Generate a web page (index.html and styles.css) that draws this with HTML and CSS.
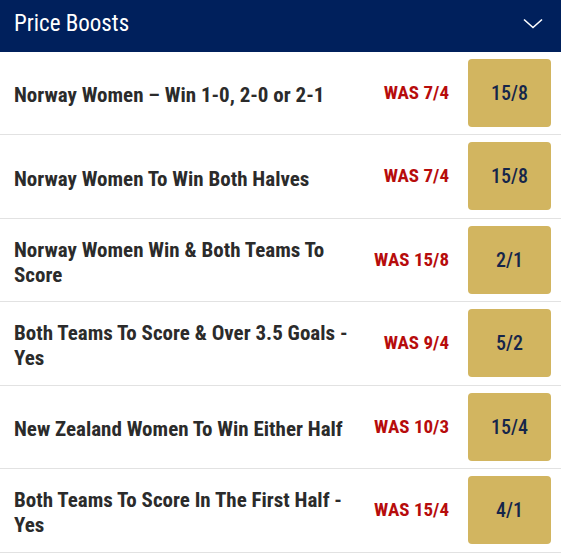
FILE: index.html
```html
<!DOCTYPE html>
<html>
<head>
<meta charset="utf-8">
<link rel="stylesheet" href="styles.css">
</head>
<body>
<div class="panel">
  <div class="header">
    <span class="title">Price Boosts</span>
    <svg class="chevron" width="20" height="12" viewBox="0 0 20 12"><path d="M1 1.5 L10 9.5 L19 1.5" fill="none" stroke="#fff" stroke-width="1.6"/></svg>
  </div>
  <div class="row">
    <div class="name">Norway Women – Win 1-0, 2-0 or 2-1</div>
    <div class="was">WAS 7/4</div>
    <div class="odds">15/8</div>
  </div>
  <div class="row">
    <div class="name">Norway Women To Win Both Halves</div>
    <div class="was">WAS 7/4</div>
    <div class="odds">15/8</div>
  </div>
  <div class="row">
    <div class="name">Norway Women Win &amp; Both Teams To Score</div>
    <div class="was">WAS 15/8</div>
    <div class="odds">2/1</div>
  </div>
  <div class="row">
    <div class="name">Both Teams To Score &amp; Over 3.5 Goals - Yes</div>
    <div class="was">WAS 9/4</div>
    <div class="odds">5/2</div>
  </div>
  <div class="row">
    <div class="name">New Zealand Women To Win Either Half</div>
    <div class="was">WAS 10/3</div>
    <div class="odds">15/4</div>
  </div>
  <div class="row">
    <div class="name">Both Teams To Score In The First Half - Yes</div>
    <div class="was">WAS 15/4</div>
    <div class="odds">4/1</div>
  </div>
</div>
</body>
</html>
```
FILE: styles.css
```css
html, body {
  margin: 0;
  padding: 0;
  background: #fff;
}
body {
  font-family: Roboto, "Liberation Sans", sans-serif;
  font-stretch: 75%;
}
.panel {
  width: 561px;
}
.header {
  height: 52px;
  background: #00205c;
  display: flex;
  align-items: center;
  justify-content: space-between;
  padding: 0 18px 0 14px;
  box-sizing: border-box;
}
.title {
  color: #fff;
  font-size: 23px;
  font-weight: 400;
  margin-top: -6px;
}
.chevron {
  margin-top: -4px;
}
.row {
  display: flex;
  align-items: center;
  height: 83px;
  box-sizing: border-box;
  padding: 7px 10px 8px 14px;
  border-bottom: 1px solid #e2e2e2;
}
.row:nth-child(odd) {
  height: 84px;
}
.name {
  flex: 1;
  padding-right: 24px;
  font-size: 21px;
  font-weight: 700;
  line-height: 25px;
  color: #2b2b2b;
  margin-top: 6px;
}
.was {
  color: #b70c0c;
  font-size: 19px;
  font-weight: 700;
  text-align: right;
  white-space: nowrap;
  margin-right: 19px;
  margin-top: -1px;
}
.odds {
  width: 83px;
  height: 68px;
  flex: none;
  background: #d2b560;
  border-radius: 4px;
  color: #15254a;
  font-size: 20px;
  font-weight: 500;
  display: flex;
  align-items: center;
  justify-content: center;
}
```
